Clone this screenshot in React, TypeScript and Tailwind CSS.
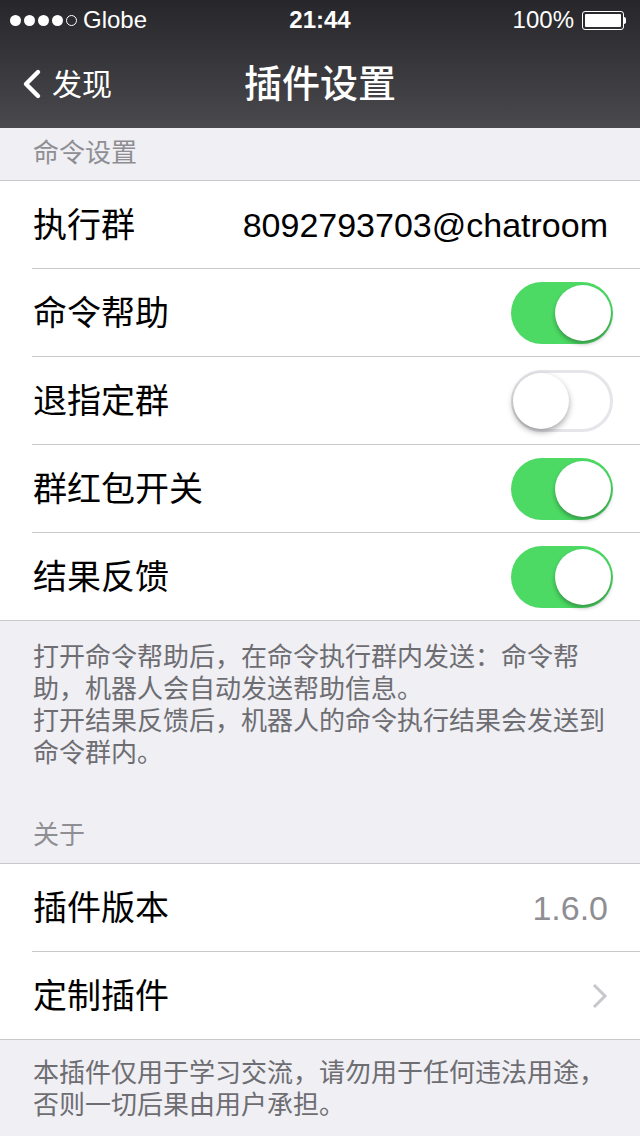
import { ChevronLeft } from 'lucide-react';

const font = { fontFamily: '"Liberation Sans", "Noto Sans CJK SC", sans-serif' };

function Toggle({ on }: { on: boolean }) {
  return on ? (
    <div className="relative w-[102px] h-[62px] rounded-full bg-[#4cd964]">
      <div className="absolute right-[2px] top-[3px] w-[56px] h-[56px] rounded-full bg-white shadow-[0_3px_4px_rgba(0,0,0,0.3)]" />
    </div>
  ) : (
    <div className="relative w-[102px] h-[62px] rounded-full border-[3px] border-[#e5e5ea] bg-white">
      <div className="absolute left-[-1px] top-[0px] w-[56px] h-[56px] rounded-full bg-white shadow-[0_3px_6px_rgba(0,0,0,0.35)]" />
    </div>
  );
}

function Row({ label, children, last }: { label: string; children?: React.ReactNode; last?: boolean }) {
  return (
    <>
      <div className="h-[87px] flex items-center justify-between pl-[33px] pr-[27px] bg-white">
        <span className="text-[34px] text-black leading-none">{label}</span>
        {children}
      </div>
      {!last && <div className="h-px bg-white"><div className="ml-[32px] h-px bg-[#c8c7cc]" /></div>}
    </>
  );
}

export default function App() {
  return (
    <div className="w-[640px] h-[1136px] bg-[#efeff4] overflow-hidden" style={font}>
      {/* Header */}
      <div className="h-[128px] bg-gradient-to-b from-[#27272b] to-[#4a4a4e] text-white">
        <div className="h-[40px] flex items-center justify-between pl-[10px] pr-[14px] relative">
          <div className="flex items-center gap-[6px]">
            <div className="flex gap-[3px] items-center">
              {[0, 1, 2, 3].map((i) => (
                <div key={i} className="w-[11px] h-[11px] rounded-full bg-white" />
              ))}
              <div className="w-[11px] h-[11px] rounded-full border border-white" />
            </div>
            <span className="text-[24px]">Globe</span>
          </div>
          <span className="absolute left-1/2 -translate-x-1/2 text-[24px] font-bold">21:44</span>
          <div className="flex items-center gap-[8px]">
            <span className="text-[24px]">100%</span>
            <div className="flex items-center">
              <div className="w-[42px] h-[19px] border border-white rounded-[3px] p-[2px]">
                <div className="w-full h-full bg-white rounded-[1px]" />
              </div>
              <div className="w-[2px] h-[7px] bg-white rounded-r-sm" />
            </div>
          </div>
        </div>
        <div className="h-[88px] flex items-center relative">
          <div className="flex items-center pl-[8px]">
            <ChevronLeft size={48} strokeWidth={2.2} className="-mr-[4px]" />
            <span className="text-[30px]">发现</span>
          </div>
          <span className="absolute left-1/2 -translate-x-1/2 text-[38px] font-medium">插件设置</span>
        </div>
      </div>

      {/* Command settings */}
      <div className="h-[52px] flex items-end pb-[12px] pl-[33px] text-[26px] leading-[30px] text-[#8e8e93]">命令设置</div>
      <div className="border-y border-[#c8c7cc]">
        <Row label="执行群">
          <span className="text-[34px] text-black leading-none pr-[5px]">8092793703@chatroom</span>
        </Row>
        <Row label="命令帮助"><Toggle on /></Row>
        <Row label="退指定群"><Toggle on={false} /></Row>
        <Row label="群红包开关"><Toggle on /></Row>
        <Row label="结果反馈" last><Toggle on /></Row>
      </div>
      <div className="pt-[20px] pl-[33px] pr-[27px] text-[26px] leading-[32px] text-[#6d6d72]">
        <p>打开命令帮助后，在命令执行群内发送：命令帮助，机器人会自动发送帮助信息。</p>
        <p>打开结果反馈后，机器人的命令执行结果会发送到命令群内。</p>
      </div>

      {/* About */}
      <div className="h-[94px] flex items-end pb-[13px] pl-[33px] text-[26px] leading-[30px] text-[#8e8e93]">关于</div>
      <div className="border-y border-[#c8c7cc]">
        <Row label="插件版本">
          <span className="text-[34px] text-[#8e8e93] leading-none pr-[5px]">1.6.0</span>
        </Row>
        <Row label="定制插件" last>
          <svg width="18" height="28" viewBox="0 0 18 28" className="mr-[4px]">
            <path d="M3 3 L14 14 L3 25" fill="none" stroke="#c7c7cc" strokeWidth="3" />
          </svg>
        </Row>
      </div>
      <div className="pt-[17px] pl-[33px] pr-[27px] text-[26px] leading-[32px] text-[#6d6d72]">
        <p>本插件仅用于学习交流，请勿用于任何违法用途，否则一切后果由用户承担。</p>
      </div>
    </div>
  );
}
